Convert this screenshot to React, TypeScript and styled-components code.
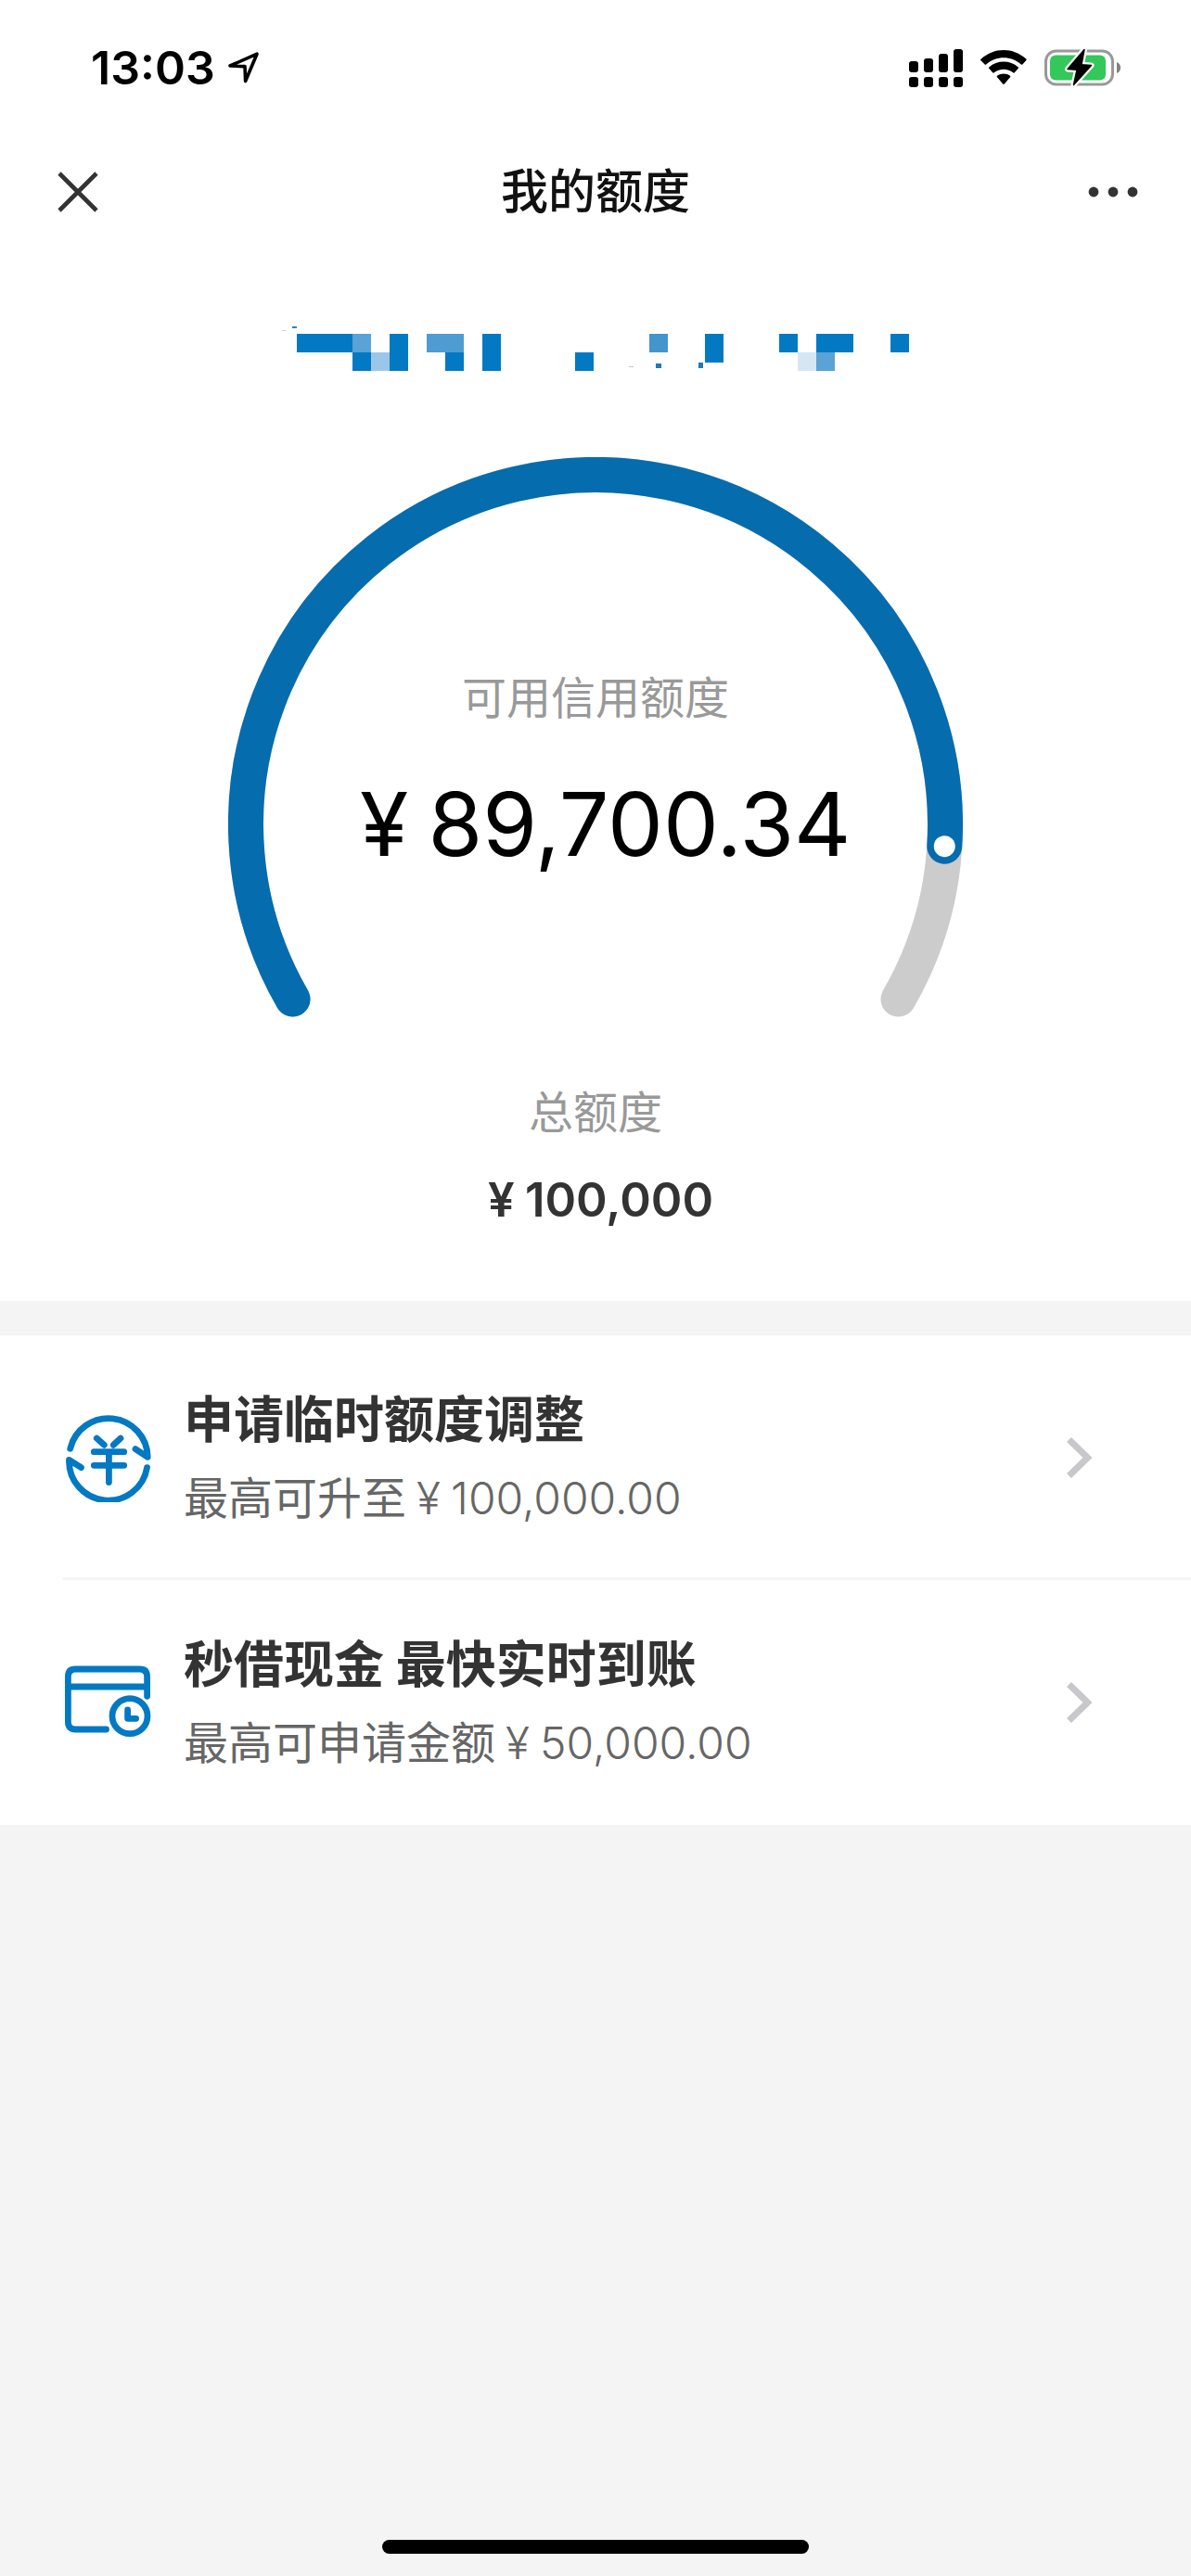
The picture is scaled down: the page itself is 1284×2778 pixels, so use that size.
import React from "react";
import styled, { createGlobalStyle } from "styled-components";

const color = {
  brand: "#0479c3",
  gauge: "#056cae",
  track: "#cccccc",
  ink: "#333333",
  body: "#666666",
  muted: "#999999",
  page: "#f4f4f4",
};

const GlobalStyle = createGlobalStyle`
  * { box-sizing: border-box; }
  body {
    margin: 0;
    background: ${color.page};
    font-family: Inter, "Noto Sans CJK SC", sans-serif;
    color: ${color.ink};
  }
`;

const Page = styled.div`
  min-height: 100vh;
  display: flex;
  flex-direction: column;
`;

const Top = styled.header`
  background: #fff;
`;

const StatusBar = styled.div`
  height: 146px;
  padding: 0 76px 0 98px;
  display: flex;
  align-items: center;
  justify-content: space-between;
`;

const StatusGroup = styled.div<{ $gap: number }>`
  display: flex;
  align-items: center;
  gap: ${(p) => p.$gap}px;
`;

const Clock = styled.time`
  font-size: 50px;
  line-height: 60px;
  font-weight: 600;
  color: #000;
`;

const NavBar = styled.nav`
  height: 122px;
  padding: 0 48px;
  display: grid;
  grid-template-columns: 72px 1fr 72px;
  align-items: center;
`;

const IconButton = styled.button`
  height: 72px;
  padding: 0;
  border: 0;
  background: none;
  display: flex;
  align-items: center;
  justify-content: center;
`;

const Title = styled.h1`
  margin: 0;
  text-align: center;
  font-size: 51px;
  line-height: 72px;
  font-weight: 500;
  color: #111;
`;

const Summary = styled.section`
  background: #fff;
  padding: 84px 0 73px;
  display: flex;
  flex-direction: column;
  align-items: center;
`;

const Gauge = styled.div`
  margin: 93px 0 69px;
  display: grid;
  justify-items: center;

  > * {
    grid-area: 1 / 1;
  }
`;

const GaugeText = styled.div`
  padding-top: 226px;
  display: flex;
  flex-direction: column;
  align-items: center;
  gap: 42px;
`;

const Label = styled.span`
  font-size: 48px;
  line-height: 68px;
  color: ${color.muted};
`;

const Available = styled.strong`
  font-size: 95px;
  line-height: 120px;
  font-weight: 400;
  color: #000;
`;

const Total = styled.strong`
  margin-top: 24px;
  font-size: 51px;
  line-height: 72px;
  font-weight: 600;
`;

const YenSign = styled.span`
  display: inline-block;
  width: 1em;
  text-align: center;
`;

const Offers = styled.ul`
  list-style: none;
  margin: 37px 0 0;
  padding: 0;
  background: #fff;
`;

const Offer = styled.li`
  padding-left: 68px;

  &:not(:last-child) > a {
    box-shadow: inset 0 -3px ${color.page};
  }
`;

const OfferLink = styled.a`
  height: 264px;
  padding-right: 106px;
  display: flex;
  align-items: center;
  color: inherit;
  text-decoration: none;
`;

const OfferText = styled.span`
  flex: 1;
  margin-left: 34px;
  padding-top: 4px;
  display: flex;
  flex-direction: column;
`;

const OfferTitle = styled.span`
  font-size: 54px;
  line-height: 84px;
  font-weight: 700;
`;

const OfferNote = styled.span`
  font-size: 48px;
  line-height: 84px;
  color: ${color.body};
`;

const OfferAmount = styled.span`
  font-weight: 300;
`;

const HomeArea = styled.footer`
  margin-top: auto;
  padding-bottom: 24px;
  display: flex;
  justify-content: center;
`;

const HomeIndicator = styled.div`
  width: 460px;
  height: 15px;
  border-radius: 8px;
  background: #000;
`;

function Money({ value }: { value: string }) {
  return (
    <>
      <YenSign>¥</YenSign>
      {value}
    </>
  );
}

function LocationIcon() {
  return (
    <svg width="34" height="34" viewBox="0 0 34 34" fill="none" stroke="#000" strokeWidth="3.600" strokeLinejoin="round">
      <path d="M2 15 L31 2.200 L18.600 31.500 L18 15.600 Z" />
    </svg>
  );
}

function SignalIcon() {
  const bars = [
    { x: 0, y: 13 },
    { x: 16, y: 10 },
    { x: 32, y: 5 },
    { x: 48, y: 0 },
  ];
  return (
    <svg width="58" height="41" viewBox="0 0 58 41">
      {bars.map((b) => (
        <g key={b.x}>
          <rect x={b.x} y={b.y} width="10" height={25 - b.y} rx="3" />
          <rect x={b.x} y="30" width="10" height="11" rx="3" />
        </g>
      ))}
    </svg>
  );
}

function WifiIcon() {
  return (
    <svg width="50" height="38" viewBox="0 0 50 38">
      <path d="M0 10.8 Q0 10.2 .8 9.6 C14.5 -3.2 35.5 -3.2 49.2 9.6 Q50 10.2 49.4 11 L45.3 15.4 Q44.6 16 43.8 15.4 C33 5.8 17 5.8 6.2 15.4 Q5.4 16 4.7 15.4 Z" />
      <path d="M9 19.6 Q8.6 19 9.3 18.4 C18 10.6 32 10.6 40.7 18.4 Q41.4 19 41 19.6 L36.8 24.3 Q36 25 35.2 24.3 C29.5 19.4 20.5 19.4 14.8 24.3 Q14 25 13.2 24.3 Z" />
      <path d="M17.8 29 Q17.3 28.4 18 27.8 C22 24.6 28 24.6 32 27.8 Q32.7 28.4 32.2 29 L25.8 36.6 Q25 37.4 24.2 36.6 Z" />
    </svg>
  );
}

function BatteryIcon() {
  const bolt = "M43 0.5 L25 21.5 L35 22.3 L31.5 38.5 L50.5 17.5 L40 16.7 Z";
  return (
    <svg width="82" height="40" viewBox="0 0 82 40">
      <rect x="1.5" y="2" width="72" height="36" rx="11" fill="none" stroke="#999" strokeWidth="3" />
      <path d="M78 14 Q82 15.5 82 20 Q82 24.500 78 26 Z" fill="#808080" />
      <rect x="6" y="6.500" width="60" height="27" rx="6" fill="#34c759" />
      <path d={bolt} fill="#fff" stroke="#fff" strokeWidth="6" strokeLinejoin="round" />
      <path d={bolt} fill="#000" stroke="#000" strokeWidth="1.500" strokeLinejoin="round" />
    </svg>
  );
}

function CloseIcon() {
  return (
    <svg width="44" height="44" viewBox="0 0 44 44" stroke={color.ink} strokeWidth="4.600">
      <path d="M2 2 L42 42 M42 2 L2 42" />
    </svg>
  );
}

function MoreIcon() {
  return (
    <svg width="54" height="12" viewBox="0 0 54 12" fill={color.ink}>
      <circle cx="6" cy="6" r="5.400" />
      <circle cx="27" cy="6" r="5.400" />
      <circle cx="48" cy="6" r="5.400" />
    </svg>
  );
}

const mosaic: [number, number, number, number, string][] = [
  [16, 8, 60, 20, color.brand],
  [76, 8, 20, 20, "#5ba2d6"],
  [76, 28, 20, 20, color.brand],
  [96, 28, 20, 20, "#9ac7e7"],
  [116, 8, 20, 40, color.brand],
  [156, 8, 40, 20, "#4f9cd2"],
  [176, 28, 20, 20, color.brand],
  [216, 8, 20, 40, color.brand],
  [316, 28, 20, 20, color.brand],
  [396, 8, 20, 20, "#4495ce"],
  [456, 8, 20, 31, color.brand],
  [536, 8, 20, 20, color.brand],
  [556, 28, 20, 20, "#d6e7f4"],
  [576, 8, 40, 20, color.brand],
  [576, 28, 20, 20, "#5ba2d6"],
  [656, 8, 20, 20, color.brand],
  [11, 0, 5, 2, "#2b86c0"],
  [0, 4, 4, 1, "#b9d8ec"],
  [374, 43, 5, 1, "#bcc8d0"],
  [403, 40, 6, 5, "#1f7ab5"],
  [449, 39, 5, 6, "#1f7ab5"],
];

function HiddenCardNumber() {
  return (
    <svg width="676" height="48" viewBox="0 0 676 48" shapeRendering="crispEdges" role="img">
      {mosaic.map(([x, y, w, h, fill]) => (
        <rect key={`${x}-${y}`} x={x} y={y} width={w} height={h} fill={fill} />
      ))}
    </svg>
  );
}

const RADIUS = 377;
const CENTER = 396;

function pointAt(degrees: number) {
  const a = (degrees * Math.PI) / 180;
  return { x: CENTER + RADIUS * Math.cos(a), y: CENTER + RADIUS * Math.sin(a) };
}

function arc(from: number, to: number) {
  const a = pointAt(from);
  const b = pointAt(to);
  return `M${a.x} ${a.y} A${RADIUS} ${RADIUS} 0 ${to - from > 180 ? 1 : 0} 1 ${b.x} ${b.y}`;
}

function GaugeArc({ ratio }: { ratio: number }) {
  const end = 150 + 240 * ratio;
  const knob = pointAt(end);
  return (
    <svg width="792" height="604" viewBox="0 0 792 604" fill="none" strokeWidth="38" strokeLinecap="round">
      <path d={arc(150, 390)} stroke={color.track} />
      <path d={arc(150, end)} stroke={color.gauge} />
      <circle cx={knob.x} cy={knob.y} r="11.500" fill="#fff" />
    </svg>
  );
}

function ExchangeIcon() {
  return (
    <svg width="96" height="96" viewBox="0 0 96 96" fill="none" stroke={color.brand} strokeWidth="6.800" strokeLinecap="round" strokeLinejoin="round">
      <path d="M7.700 38.300 A42.300 42.300 0 0 1 91.200 47.300 L78 38.700" />
      <path d="M90.500 58.700 A42.300 42.300 0 0 1 6.500 50.300 L19.500 58.700" />
      <path d="M36.300 27 L44.300 34.300 M62 27 L54.300 34.300 M33.300 41.700 H65.700 M33.300 56.300 H65.700 M49.400 41.700 V74.500" />
    </svg>
  );
}

function CardClockIcon() {
  return (
    <svg width="96" height="96" viewBox="0 0 96 96" fill="none" stroke={color.brand} strokeWidth="6.800" strokeLinecap="round" strokeLinejoin="round">
      <path d="M46.500 77 H13.500 Q5.400 77 5.400 69 V20 Q5.400 12 13.500 12 H82.500 Q90.600 12 90.600 20 V41.300 M5.400 31 H90.600" />
      <circle cx="72" cy="62.700" r="19" />
      <path d="M69.600 56 V65.300 H78.600" />
    </svg>
  );
}

function Chevron() {
  return (
    <svg width="28" height="44" viewBox="0 0 28 44" fill="none" stroke="#c7c7cc" strokeWidth="7">
      <path d="M2.500 2.500 L22.500 22 L2.500 41.500" />
    </svg>
  );
}

const offers = [
  { icon: <ExchangeIcon />, title: "申请临时额度调整", note: "最高可升至", amount: "100,000.00" },
  { icon: <CardClockIcon />, title: "秒借现金 最快实时到账", note: "最高可申请金额", amount: "50,000.00" },
];

export default function App() {
  return (
    <>
      <GlobalStyle />
      <Page>
        <Top>
          <StatusBar>
            <StatusGroup $gap={14}>
              <Clock>13:03</Clock>
              <LocationIcon />
            </StatusGroup>
            <StatusGroup $gap={19}>
              <SignalIcon />
              <WifiIcon />
              <BatteryIcon />
            </StatusGroup>
          </StatusBar>
          <NavBar>
            <IconButton aria-label="关闭">
              <CloseIcon />
            </IconButton>
            <Title>我的额度</Title>
            <IconButton aria-label="更多">
              <MoreIcon />
            </IconButton>
          </NavBar>
        </Top>
        <main>
          <Summary>
            <HiddenCardNumber />
            <Gauge>
              <GaugeArc ratio={0.89} />
              <GaugeText>
                <Label>可用信用额度</Label>
                <Available>
                  <Money value="89,700.34" />
                </Available>
              </GaugeText>
            </Gauge>
            <Label>总额度</Label>
            <Total>
              <Money value="100,000" />
            </Total>
          </Summary>
          <Offers>
            {offers.map((o) => (
              <Offer key={o.title}>
                <OfferLink href="#">
                  {o.icon}
                  <OfferText>
                    <OfferTitle>{o.title}</OfferTitle>
                    <OfferNote>
                      {o.note}
                      <OfferAmount>
                        <Money value={o.amount} />
                      </OfferAmount>
                    </OfferNote>
                  </OfferText>
                  <Chevron />
                </OfferLink>
              </Offer>
            ))}
          </Offers>
        </main>
        <HomeArea>
          <HomeIndicator />
        </HomeArea>
      </Page>
    </>
  );
}
